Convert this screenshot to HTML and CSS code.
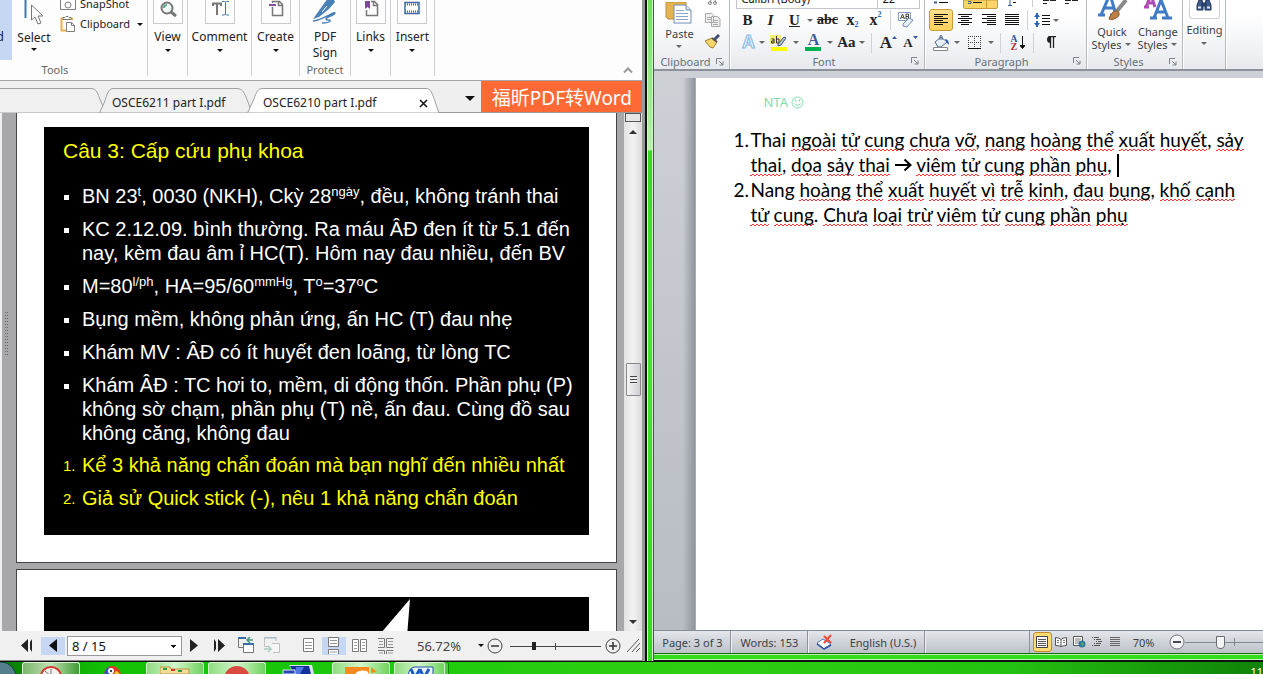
FILE: index.html
```html
<!DOCTYPE html>
<html lang="vi">
<head>
<meta charset="utf-8">
<title>OSCE6210 part I.pdf</title>
<link rel="stylesheet" href="styles.css">
</head>
<body>
<div class="desktop">
<section class="reader" aria-label="PDF reader">
  <div class="rd-ribbon">
    <div class="rd-group tools">
      <div class="tools-row">
        <button class="hand" aria-label="Hand">d</button>
        <button class="select-tool">
          <svg width="26" height="28" viewBox="0 0 26 28"><path d="M4.500 0v18" stroke="#3a78b5" stroke-width="2"/><path d="M10.500 5v15l3.500-3 3 7 3-1-3-7h5z" fill="#fff" stroke="#777" stroke-width="1"/></svg>
          <span>Select</span><i class="caret"></i>
        </button>
        <div class="tools-col">
          <button class="line-btn"><svg width="16" height="14" viewBox="0 0 16 14"><path d="M.5 0v12.500h15V0" fill="none" stroke="#808080"/><circle cx="8" cy="8" r="3" fill="none" stroke="#808080"/></svg><span>SnapShot</span></button>
          <button class="line-btn"><svg width="16" height="16" viewBox="0 0 16 16"><path d="M4 2.500H1.500v12H6M10 2.500h2V4" fill="none" stroke="#eeb050" stroke-width="2"/><path d="M3 3.500V1.500h2L6 .5h2L9 1.500h2v2z" fill="#fff" stroke="#777"/><path d="M6.500 6.500h5l3 3v6h-8zM11.500 6.500v3h3" fill="#fff" stroke="#808080"/></svg><span>Clipboard</span><i class="caret"></i></button>
        </div>
      </div>
      <div class="group-name">Tools</div>
    </div>
    <div class="rd-group g40"><button class="big"><span class="pic"><svg width="28" height="20" viewBox="0 0 28 20"><circle cx="13" cy="8" r="5.500" fill="#f4faf7" stroke="#777" stroke-width="2"/><path d="M10 8a3 3 0 0 1 3-3" fill="none" stroke="#59a98c" stroke-width="2"/><path d="M17 12l5 4" stroke="#777" stroke-width="3"/></svg></span><span>View</span><i class="caret"></i></button></div>
    <div class="rd-group g64"><button class="big"><span class="pic"><svg width="28" height="20" viewBox="0 0 28 20"><path d="M7 6V3.500h8V6M11 4v11" fill="none" stroke="#777" stroke-width="2"/><path d="M16 1.500h2.500L19.500 2l1-.5H23M19.500 2v12M16 15h2.500l1-1 1 1H23" fill="none" stroke="#3a78b5"/></svg></span><span>Comment</span><i class="caret"></i></button></div>
    <div class="rd-group g48"><button class="big"><span class="pic"><svg width="28" height="20" viewBox="0 0 28 20"><path d="M10.500 7v8.500h10v-11l-3-3h-7V3M16.500 1.500v4h4" fill="none" stroke="#777" stroke-width="1.500"/><path d="M7 5h7" stroke="#8a4ba5" stroke-width="2"/></svg></span><span>Create</span><i class="caret"></i></button></div>
    <div class="rd-group g51"><button class="big sign"><svg width="28" height="25" viewBox="0 0 28 25"><path d="M2 19L12 5l5-7h5l2 4-6 7L8 17z" fill="#4a80b8"/><path d="M11 12l5-6" stroke="#fff"/><path d="M2 21c9-1 22-10 22-8s-9 4-9 6 5 0 4 2-5 2-8 2" fill="none" stroke="#4a80b8" stroke-width="1.500"/></svg><span>PDF</span><span>Sign</span></button><div class="group-name">Protect</div></div>
    <div class="rd-group g40"><button class="big"><span class="pic"><svg width="28" height="20" viewBox="0 0 28 20"><path d="M9.500 10v5.500h11v-11l-3-3H14M16.500 1.500v4h4" fill="none" stroke="#777" stroke-width="1.500"/><path d="M8 1h5v8l-2.500-2L8 9z" fill="#7d4a96"/></svg></span><span>Links</span><i class="caret"></i></button></div>
    <div class="rd-group g44"><button class="big"><span class="pic"><svg width="28" height="20" viewBox="0 0 28 20"><path d="M7 2.500h14v11H7z" fill="#fff" stroke="#3a6da5" stroke-width="1.500"/><path d="M7 4.500h14M7 11.500h14" stroke="#3a6da5" stroke-width="2" stroke-dasharray="1 1"/></svg></span><span>Insert</span><i class="caret"></i></button></div>
    <button class="collapse" aria-label="Collapse ribbon"><svg width="10" height="8" viewBox="0 0 10 8"><path d="M1 6.500l4-4 4 4" fill="none" stroke="#999" stroke-width="2"/></svg></button>
  </div>

  <div class="tabs">
    <button class="tab first" aria-label="Previous document"><svg width="108" height="25" viewBox="0 0 108 25"><path d="M-1 .5h92c6 0 7 6 9 11l6 13.500H-1z" fill="#f0f0f0" stroke="#a0a0a0"/></svg></button>
    <button class="tab second"><svg width="154" height="25" viewBox="0 0 154 25"><path d="M.5 25l5-11C7.500 8 9 .5 14 .5h124c6 0 8 6 10 11l5 13.500z" fill="#f0f0f0" stroke="#a0a0a0"/></svg><span>OSCE6211 part I.pdf</span></button>
    <button class="tab third"><svg width="193" height="25" viewBox="0 0 193 25"><path d="M.5 25l6-13C8.500 7 10 .5 15 .5h164c5 0 6 5 8 10l5 14.500z" fill="#fff" stroke="#a0a0a0"/></svg><span>OSCE6210 part I.pdf</span><svg class="x" width="9" height="9" viewBox="0 0 9 9"><path d="M1 1l7 7M8 1L1 8" stroke="#111" stroke-width="1.500"/></svg></button>
    <button class="tab-list" aria-label="Document list"><i class="caret wide"></i></button>
    <button class="promo">福昕PDF转Word</button>
  </div>

  <div class="viewer">
    <div class="nav-strip"><svg width="3" height="44" viewBox="0 0 3 44"><path d="M.5 0v44M2.500 0v44" stroke="#666" stroke-dasharray="1 2"/></svg></div>
    <div class="pages">
      <article class="page">
        <div class="slide">
          <h1>Câu 3: Cấp cứu phụ khoa</h1>
          <ul class="points">
            <li>BN 23<sup>t</sup>, 0030 (NKH), Ckỳ 28<sup>ngày</sup>, đều, không tránh thai</li>
            <li>KC 2.12.09. bình thường. Ra máu ÂĐ đen ít từ 5.1 đến<br>nay, kèm đau âm ỉ HC(T). Hôm nay đau nhiều, đến BV</li>
            <li>M=80<sup>l/ph</sup>, HA=95/60<sup>mmHg</sup>, T<sup>o</sup>=37<sup>o</sup>C</li>
            <li>Bụng mềm, không phản ứng, ấn HC (T) đau nhẹ</li>
            <li>Khám MV : ÂĐ có ít huyết đen loãng, từ lòng TC</li>
            <li>Khám ÂĐ : TC hơi to, mềm, di động thốn. Phần phụ (P)<br>không sờ chạm, phần phụ (T) nề, ấn đau. Cùng đồ sau<br>không căng, không đau</li>
          </ul>
          <ol class="questions">
            <li>Kể 3 khả năng chẩn đoán mà bạn nghĩ đến nhiều nhất</li>
            <li>Giả sử Quick stick (-), nêu 1 khả năng chẩn đoán</li>
          </ol>
        </div>
      </article>
      <article class="page next">
        <div class="slide blank"><svg width="32" height="52" viewBox="0 0 32 52"><path d="M29 2L0 36v16h25z" fill="#fff"/></svg></div>
      </article>
    </div>
    <div class="scroll">
      <span class="split"></span>
      <button aria-label="Scroll up"><svg width="8" height="5" viewBox="0 0 8 5"><path d="M0 5l4-4 4 4z" fill="#333"/></svg></button>
      <span class="thumb"><i></i></span>
      <button class="down" aria-label="Scroll down"><svg width="8" height="5" viewBox="0 0 8 5"><path d="M0 0h8L4 4z" fill="#333"/></svg></button>
    </div>
  </div>

  <div class="rd-status">
    <button class="w-first" aria-label="First page"><svg width="14" height="13" viewBox="0 0 14 13"><path d="M8 0v13L1 6.500zM12 0v13l-2-3V3z" fill="#222"/></svg></button>
    <button class="w-prev on" aria-label="Previous page"><svg width="8" height="13" viewBox="0 0 8 13"><path d="M8 0v13L0 6.500z" fill="#111"/></svg></button>
    <select class="page-no" aria-label="Page"><option>8 / 15</option></select>
    <button class="w-next" aria-label="Next page"><svg width="8" height="13" viewBox="0 0 8 13"><path d="M0 0v13l8-6.500z" fill="#222"/></svg></button>
    <button class="w-last" aria-label="Last page"><svg width="14" height="13" viewBox="0 0 14 13"><path d="M5 0v13l7-6.500zM1 0v13l2-3V3z" fill="#222"/></svg></button>
    <button class="w-view" aria-label="Previous view"><svg width="17" height="17" viewBox="0 0 17 17"><path d="M7 .5H.5v10H5" fill="none" stroke="#777"/><path d="M0 1h8" stroke="#3a6da5" stroke-width="2"/><path d="M5.500 6.500h10v9h-10z" fill="#fff" stroke="#777"/><path d="M5 7h11" stroke="#3a6da5" stroke-width="2"/><path d="M15 3H10M12 0L9 3l3 3" fill="none" stroke="#4a9a7d" stroke-width="1.500"/></svg></button>
    <button class="w-view faded" aria-label="Next view"><svg width="17" height="17" viewBox="0 0 17 17"><path d="M12 4V.5H.5v9H4" fill="none" stroke="#777"/><path d="M0 1h13" stroke="#3a6da5"/><path d="M8 6.500h7.500v9H9" fill="#fff" stroke="#777"/><path d="M0 12h6M4 9l3 3-3 3" fill="none" stroke="#4a9a7d" stroke-width="1.500"/></svg></button>
    <button class="w-mode m1" aria-label="Single page"><svg width="12" height="15" viewBox="0 0 12 15"><path d="M.5.5h10v13H.5z" fill="#fff" stroke="#777"/><path d="M2 4.500h7M2 7.500h7M2 10.500h7" stroke="#999"/></svg></button>
    <button class="w-mode on" aria-label="Continuous"><svg width="12" height="17" viewBox="0 0 12 17"><path d="M.5.5h10v9H.5zM.5 17v-4.500h10V17" fill="#fff" stroke="#777"/><path d="M2 3.500h7M2 6.500h7M2 15h7" stroke="#999"/></svg></button>
    <button class="w-mode m3" aria-label="Facing"><svg width="16" height="14" viewBox="0 0 16 14"><path d="M.5.5h6v12h-6zM8.500.5h6v12h-6z" fill="#fff" stroke="#777"/><path d="M2 3.500h3M2 6.500h3M2 9.500h3M10 3.500h3M10 6.500h3M10 9.500h3" stroke="#999"/></svg></button>
    <button class="w-mode m4" aria-label="Continuous facing"><svg width="16" height="16" viewBox="0 0 16 16"><path d="M0 .5h6.500v9H0M15.500.5h-7v9h7M0 12.500h6.500V16M15.500 12.500h-7V16" fill="none" stroke="#777"/><path d="M1 3.500h4M1 6.500h4M10 3.500h5M10 6.500h5M1 15h4M10 15h5" stroke="#999"/></svg></button>
    <button class="zoom-val">56.72%</button>
    <button class="zoom-drop" aria-label="Zoom menu"><i class="caret"></i></button>
    <button class="round" aria-label="Zoom out"><svg width="16" height="16" viewBox="0 0 16 16"><circle cx="8" cy="8" r="7" fill="none" stroke="#444"/><path d="M4 8h8" stroke="#333" stroke-width="1.500"/></svg></button>
    <input class="zoom-range" type="range" min="0" max="100" value="25" aria-label="Zoom">
    <button class="round" aria-label="Zoom in"><svg width="16" height="16" viewBox="0 0 16 16"><circle cx="8" cy="8" r="7" fill="none" stroke="#444"/><path d="M4 8h8M8 4v8" stroke="#333" stroke-width="1.500"/></svg></button>
    <svg class="grip" width="13" height="13" viewBox="0 0 13 13"><path d="M0 13L12 0M5 13l8-9M9 13l4-4" stroke="#555"/></svg>
  </div>
</section>
<div class="edge"></div>

<section class="word" aria-label="Word processor">
  <div class="wd-ribbon">
    <div class="wg clip">
      <div class="clip-row">
        <button class="paste"><svg width="28" height="22" viewBox="0 0 28 22"><path d="M1 0h20v17H3l-2-2z" fill="#e5b452" stroke="#c08e35"/><path d="M9 3h12l5 5v13H9z" fill="#fff" stroke="#6d8bb5"/><path d="M21 3v5h5" fill="#dce6f3" stroke="#6d8bb5"/><path d="M11 8.500h8M11 11.500h12M11 14.500h12M11 17.500h12" stroke="#8fa5c8"/></svg><span>Paste</span><i class="caret g"></i></button>
        <div class="clip-col">
          <button aria-label="Cut"><svg width="16" height="6" viewBox="0 0 16 6"><path d="M6 0l-1 3M10 0l1 3" stroke="#888"/><circle cx="5" cy="3" r="1.500" fill="none" stroke="#888"/><circle cx="10" cy="3" r="1.500" fill="none" stroke="#888"/></svg></button>
          <button aria-label="Copy"><svg width="16" height="14" viewBox="0 0 16 14"><path d="M.5.5h6l2 2v7h-8zM6.500 3.500h6l2.500 2.500v7.500H6.500z" fill="#eee" stroke="#aaa"/><path d="M2 4.500h4M2 6.500h4M8 7.500h5M8 9.500h5M8 11.500h5" stroke="#aaa"/></svg></button>
          <button aria-label="Format painter"><svg width="17" height="15" viewBox="0 0 17 15"><path d="M10 6l5-5" stroke="#444f78" stroke-width="3"/><path d="M1 7l7-3 5 4-4 6-3-1z" fill="#f3d66b" stroke="#a5802d"/><path d="M8 4l5 4" stroke="#555" stroke-width="2"/></svg></button>
        </div>
      </div>
      <div class="wg-name"><span>Clipboard</span><svg width="8" height="8" viewBox="0 0 8 8"><path d="M.5 6V.5H6M3 3l4 4M7 3.500V7H3.500" fill="none" stroke="#7b828c"/></svg></div>
    </div>
    <div class="wg font">
      <div class="boxes"><span class="fname">Calibri (Body)</span><span class="fsize">22</span></div>
      <div class="tr">
        <button class="s22 b">B</button><button class="s24 it">I</button><button class="s24 un"><u>U</u></button><i class="caret g"></i><button class="s26 st">abc</button><button class="s24 b2">x<sub>2</sub></button><button class="s22 b2">x<sup>2</sup></button><i class="vsep"></i>
        <button class="s22" aria-label="Clear formatting"><svg width="16" height="16" viewBox="0 0 16 16"><path d="M.5.5h12v8H.5z" fill="#fff" stroke="#7d9bc5"/><path d="M2.500 7l2-5 2 5M3.500 5.500h2M8 2v5h2.500V2H8M8 4.500h2" fill="none" stroke="#444"/><path d="M5 12l6-6 4 2-6 7-4-1z" fill="#e8eef8" stroke="#6d8bb5"/></svg></button>
      </div>
      <div class="tr low">
        <button class="s20 glow">A</button><i class="caret g"></i>
        <button class="s26 hl" aria-label="Highlight"><svg width="18" height="16" viewBox="0 0 18 16"><path d="M0 0h11v9H0z" fill="#f4ea78"/><path d="M1.500 4h2.500v4H1.500V6H4M6.500 1v7H9V4H6.500" fill="none" stroke="#333"/><path d="M8 9l6-7 2 1-5 7-3 1z" fill="#aebdd8" stroke="#44567c"/><path d="M1 12h16v4H1z" fill="#ff0"/></svg></button><i class="caret g"></i>
        <button class="s26 fc"><b>A</b></button><i class="caret g"></i>
        <button class="s24 aa">Aa</button><i class="caret g"></i><i class="vsep"></i>
        <button class="s22 grow">A<svg width="5" height="4" viewBox="0 0 5 4"><path d="M0 3l2.500-3L5 3z" fill="#345c9c"/></svg></button><button class="s22 shrink">A<svg width="5" height="4" viewBox="0 0 5 4"><path d="M0 0h5L2.500 3z" fill="#345c9c"/></svg></button>
      </div>
      <div class="wg-name"><span>Font</span><svg width="8" height="8" viewBox="0 0 8 8"><path d="M.5 6V.5H6M3 3l4 4M7 3.500V7H3.500" fill="none" stroke="#7b828c"/></svg></div>
    </div>
    <div class="wg para">
      <svg class="cut-row" width="155" height="9" viewBox="0 0 155 9"><path d="M10 2.500h9" stroke="#111"/><path d="M5 1.500h3v2H5z" fill="#345c9c"/><path d="M34.500 0v7q0 1.500 1.500 1.500h31q1.500 0 1.500-1.500V0z" fill="#fbd667" stroke="#c79a39"/><path d="M57.500 0v8" stroke="#c79a39"/><path d="M39 1.500h3v2h-3" fill="none" stroke="#345c9c"/><path d="M44 2.500h9" stroke="#111"/><path d="M81 0v5M79 5.500h4" stroke="#345c9c"/><path d="M84 2.500h3" stroke="#111"/><path d="M103.500 0v7" stroke="#ccc"/><path d="M114 .5h6M121 .5h6M114 3.500h4M136 .5h6M143 .5h6M136 3.500h4" stroke="#222"/></svg>
      <div class="tr">
        <button class="s24 al on" aria-label="Align left"><svg width="14" height="12" viewBox="0 0 14 12"><path d="M0 .5h14M0 2.500h9M0 4.500h14M0 6.500h9M0 8.500h14M0 10.500h9" stroke="#111"/></svg></button>
        <button class="s24" aria-label="Center"><svg width="14" height="12" viewBox="0 0 14 12"><path d="M0 .5h14M3 2.500h8M0 4.500h14M3 6.500h8M0 8.500h14M3 10.500h8" stroke="#111"/></svg></button>
        <button class="s24" aria-label="Align right"><svg width="14" height="12" viewBox="0 0 14 12"><path d="M0 .5h14M5 2.500h9M0 4.500h14M5 6.500h9M0 8.500h14M5 10.500h9" stroke="#111"/></svg></button>
        <button class="s22" aria-label="Justify"><svg width="14" height="12" viewBox="0 0 14 12"><path d="M0 .5h14M0 2.500h14M0 4.500h14M0 6.500h14M0 8.500h14M0 10.500h14" stroke="#111"/></svg></button><i class="vsep"></i>
        <button class="s20" aria-label="Line spacing"><svg width="16" height="16" viewBox="0 0 16 16"><path d="M3 1v14" stroke="#2d62b5" stroke-width="2"/><path d="M0 5l3-4 3 4zM0 11l3 4 3-4z" fill="#2d62b5"/><path d="M0 8h6" stroke="#f8f9fa" stroke-width="2"/><path d="M8 3.500h8M8 6.500h8M8 9.500h8M8 12.500h8" stroke="#111"/></svg></button><i class="caret g"></i>
      </div>
      <div class="tr low">
        <button class="s24" aria-label="Shading"><svg width="17" height="16" viewBox="0 0 17 16"><path d="M2 7l6-5 6 5-6 5H5z" fill="#e9eff8" stroke="#51698f"/><path d="M7 5V1q1.500-1.500 2 0v4" fill="none" stroke="#51698f"/><path d="M12 4q4 0 4 6l-2-2z" fill="#2d62b5"/><path d="M.5 12.500h14v3H.5z" fill="#fff" stroke="#888"/></svg></button><i class="caret g"></i>
        <button class="s26" aria-label="Borders"><svg width="13" height="13" viewBox="0 0 13 13"><path d="M0 .5h13M0 6.500h13M.5 0v12M6.500 0v12M12.500 0v12" stroke="#444" stroke-dasharray="1 1"/><path d="M0 12.500h13" stroke="#111"/></svg></button><i class="caret g"></i><i class="vsep"></i>
        <button class="s22 sort" aria-label="Sort"><span class="az"><b>A</b><b class="z">Z</b></span><svg width="5" height="14" viewBox="0 0 5 14"><path d="M2.500 0v12M0 9.500l2.500 3L5 9.500z" fill="#111" stroke="#111"/></svg></button><i class="vsep"></i>
        <button class="s22" aria-label="Show marks"><svg width="11" height="13" viewBox="0 0 11 13"><path d="M5.500 0v12M8.500 0v12M3.500 .5H11" stroke="#222" stroke-width="1.300"/><path d="M5.500 0a3.500 3.500 0 0 0 0 7z" fill="#222"/></svg></button>
      </div>
      <div class="wg-name"><span>Paragraph</span><svg width="8" height="8" viewBox="0 0 8 8"><path d="M.5 6V.5H6M3 3l4 4M7 3.500V7H3.500" fill="none" stroke="#7b828c"/></svg></div>
    </div>
    <div class="wg styles">
      <div class="st-row">
        <button><svg width="34" height="23" viewBox="0 0 34 23"><path d="M3 15h7M15 15h9M6 15L15-6l6 21M10 8h9" fill="none" stroke="#3f7ac6" stroke-width="3"/><path d="M31 0l-9 11" stroke="#888" stroke-width="4"/><path d="M14 19c2-6 5-9 8-8s3 5-1 7-5 2-7 1z" fill="#bd8146" stroke="#85562a"/></svg><span>Quick</span><span>Styles <i class="caret g"></i></span></button>
        <button><svg width="34" height="23" viewBox="0 0 34 23"><path d="M3 7h5M5 7l5-12 4 12M7 3h6" fill="none" stroke="#b04bb5" stroke-width="3"/><path d="M9 18h7M21 18h10M13 18L20 0l7 18M15 12h9" fill="none" stroke="#3f7ac6" stroke-width="3"/></svg><span>Change</span><span>Styles <i class="caret g"></i></span></button>
      </div>
      <div class="wg-name"><span>Styles</span><svg width="8" height="8" viewBox="0 0 8 8"><path d="M.5 6V.5H6M3 3l4 4M7 3.500V7H3.500" fill="none" stroke="#7b828c"/></svg></div>
    </div>
    <div class="wg editing"><button><span class="binoc"><svg width="16" height="12" viewBox="0 0 16 12"><path d="M3 0h3l1 4v6H1V5zM10 0h3l2 5v5H9V4zM6 3h4v3H6z" fill="#3c5a8c" stroke="#22385e"/><path d="M2 7.500h3M11 7.500h3" stroke="#dce6f5" stroke-width="2"/></svg></span><span>Editing</span><i class="caret g"></i></button></div>
  </div>

  <div class="wd-body">
    <div class="gutter"></div>
    <article class="sheet">
      <div class="head">NTA <svg width="13" height="13" viewBox="0 0 13 13"><circle cx="6.500" cy="6.500" r="5.500" fill="none" stroke="#7fdcb0"/><path d="M3.500 7.500q3 3.500 6 0" fill="none" stroke="#7fdcb0"/><path d="M4.500 3.500v2M8.500 3.500v2" stroke="#7fdcb0" stroke-width="1.500"/></svg></div>
      <ol class="answers">
        <li><p>Thai <u>ngoài</u> <u>tử</u> <u>cung</u> <u>chưa</u> <u>vỡ</u>, <u>nang</u> <u>hoàng</u> <u>thể</u> <u>xuất</u> <u>huyết</u>, <u>sảy</u><br><u>thai</u>, <u>dọa</u> <u>sảy</u> <u>thai</u> <svg class="arrow" width="17" height="14" viewBox="0 0 17 14"><path d="M0 7h15M9.500 1.500L15.500 7l-6 5.500" fill="none" stroke="#000" stroke-width="2"/></svg> <u>viêm</u> <u>tử</u> <u>cung</u> <u>phần</u> <u>phụ</u>, <i class="cursor"></i></p></li>
        <li><p>Nang <u>hoàng</u> <u>thể</u> <u>xuất</u> <u>huyết</u> <u>vì</u> <u>trễ</u> <u>kinh</u>, <u>đau</u> <u>bụng</u>, <u>khố</u> <u>cạnh</u><br><u>tử</u> <u>cung</u>. <u>Chưa</u> <u>loại</u> <u>trừ</u> <u>viêm</u> <u>tử</u> <u>cung</u> <u>phần</u> <u>phụ</u></p></li>
      </ol>
    </article>
  </div>

  <div class="wd-status">
    <button class="p1">Page: 3 of 3</button>
    <button class="p2">Words: 153</button>
    <button class="p3" aria-label="Proofing"><svg width="17" height="16" viewBox="0 0 17 16"><path d="M1 9l6-4 8 5-7 5z" fill="#fff" stroke="#5577b5"/><path d="M1 10l7 5 7-4" fill="none" stroke="#2d55a5" stroke-width="1.500"/><path d="M8 2l7 7M15 1L8 9" stroke="#f04a3a" stroke-width="2"/></svg></button>
    <button class="p4">English (U.S.)</button>
    <span class="grow-space"></span>
    <button class="v on" aria-label="Print layout"><svg width="13" height="12" viewBox="0 0 13 12"><path d="M.5.5h11v11H.5z" fill="#fff" stroke="#444"/><path d="M2 3.500h8M2 5.500h8M2 7.500h8M2 9.500h8" stroke="#555"/></svg></button>
    <button class="v" aria-label="Reading"><svg width="12" height="12" viewBox="0 0 12 12"><path d="M.5 1.500l4.500 1 1 1 1-1 4.500-1v8L7 10l-1 1-1-1-4.500-.5zM6 3v8" fill="#fff" stroke="#555"/><path d="M2 4.500h2M2 6.500h2M8 4.500h2M8 6.500h2" stroke="#777"/></svg></button>
    <button class="v" aria-label="Web layout"><svg width="13" height="12" viewBox="0 0 13 12"><path d="M.5.5h9v9h-9z" fill="#fff" stroke="#555"/><path d="M2 3h6M2 5h5M2 7h4" stroke="#777"/><circle cx="9" cy="8" r="3.500" fill="#2e7a98"/><path d="M8 6l3 2-2 2z" fill="#67b957"/></svg></button>
    <button class="v" aria-label="Outline"><svg width="10" height="10" viewBox="0 0 10 10"><path d="M0 .5h1M2 .5h5M2 2.500h1M4 2.500h5M4 4.500h1M6 4.500h4M2 6.500h1M4 6.500h5M0 8.500h1M2 8.500h6" stroke="#555"/></svg></button>
    <button class="v" aria-label="Draft"><svg width="10" height="10" viewBox="0 0 10 10"><path d="M0 .5h10M0 2.500h10M0 4.500h10M0 6.500h10M0 8.500h10" stroke="#666"/></svg></button>
    <button class="pct">70%</button>
    <button class="wminus" aria-label="Zoom out"><svg width="16" height="16" viewBox="0 0 16 16"><circle cx="8" cy="8" r="7" fill="#f2f4f6" stroke="#71777f"/><path d="M4 8h8" stroke="#444a52" stroke-width="2"/></svg></button>
    <input class="wrange" type="range" min="0" max="100" value="45" aria-label="Zoom">
  </div>
  <div class="wd-frame"></div>
</section>
</div>

<nav class="taskbar" aria-label="Taskbar">
  <button class="t orb" aria-label="Start"><svg width="18" height="12" viewBox="0 0 18 12"><circle cx="1" cy="15" r="15" fill="#547f8b" stroke="#143"/></svg></button>
  <button class="t glass red" aria-label="Browser"><svg width="24" height="10" viewBox="0 0 24 10"><ellipse cx="12" cy="10" rx="10" ry="9" fill="#f4f0ee" stroke="#d5362e" stroke-width="2"/><path d="M12 3v7M6 5l6 5" stroke="#777"/></svg></button>
  <button class="t" aria-label="Parrot"><svg width="20" height="10" viewBox="0 0 20 10"><path d="M1 10Q2 1 9 1t9 9z" fill="#e83329"/><path d="M1 10Q2 3 7 2v8z" fill="#2b55c8"/><circle cx="8" cy="6" r="3" fill="#fff"/><circle cx="8" cy="6" r="1" fill="#000"/><path d="M11 10q2-8 6 0z" fill="#ffd329"/></svg></button>
  <button class="t glass" aria-label="Files"><svg width="30" height="8" viewBox="0 0 30 8"><path d="M0 1h10l1 2h18v5H0z" fill="#f2dd98" stroke="#bb9443"/><path d="M3 3h4M18 5h4" stroke="#2e9a43" stroke-width="2"/><path d="M11 4h4" stroke="#d33" stroke-width="2"/></svg></button>
  <button class="t glass" aria-label="Recorder"><svg width="28" height="9" viewBox="0 0 28 9"><circle cx="14" cy="13" r="13" fill="#d94b3e"/></svg></button>
  <button class="t" aria-label="Network"><svg width="34" height="9" viewBox="0 0 34 9"><path d="M7 0h23l2 9H12z" fill="#dce6f0"/><path d="M8 1h19l2 8H12z" fill="#16309a"/><path d="M14 2h8l-4 7h-5z" fill="#4e78e0"/><path d="M1 5h12v4H1z" fill="#2848b8" stroke="#dce6f0"/></svg></button>
  <button class="t glass" aria-label="Foxit"><svg width="34" height="10" viewBox="0 0 34 10"><path d="M1 1h24v9H1zM27 1l6 5-6 1z" fill="#f68a1f"/><path d="M10 10q3-7 13-5l3 5z" fill="#fff"/></svg></button>
  <button class="t glass wordb" aria-label="Word"><svg width="30" height="10" viewBox="0 0 30 10"><path d="M3 10Q4 1 10 1h18v9z" fill="#eef4fc" stroke="#2456a8"/><path d="M6 3l3 7M15 3l-4 7M15 3l3 7M24 3l-4 7" stroke="#1e5ec4" stroke-width="3"/></svg></button>
  <span class="clock">11</span>
</nav>
</body>
</html>
```
FILE: styles.css
```css
* { box-sizing: border-box; }
body {
  margin: 0; height: 100vh; overflow: hidden;
  display: flex; flex-direction: column;
  background: #22b80c;
  font-family: "Noto Sans", "Open Sans", sans-serif; font-size: 12px; color: #222;
}
button { border: 0; padding: 0; margin: 0; background: none; font: inherit; color: inherit; }
svg { display: block; flex: none; }
button { display: flex; align-items: center; justify-content: center; white-space: nowrap; }
.caret { display: block; flex: none; width: 0; height: 0; border: 3px solid transparent; border-top-color: #111; border-bottom: 0; }
.caret.wide { border-width: 5px 5px 0; }
.caret.g { border-top-color: #666; margin: 0 1px; }

.desktop { flex: 1; min-height: 0; display: flex; }

/* PDF reader */
.reader { flex: 644 1 0; min-width: 0; display: flex; flex-direction: column; border-right: 3px solid #999; background: #f0f0f0; }
.edge { flex: none; width: 9px; background: linear-gradient(#6ee05c 0, #b9f0ae 150px, #35d91f 151px, #48e634 290px, #32dc1c 100%); border-left: 2px solid #111; border-right: 1px solid #1f7a14; box-shadow: inset 1px 0 #d9f5d4, inset -1px 0 #d0f5c8; }

.rd-ribbon { height: 81px; flex: none; display: flex; align-items: flex-start; background: #fdfdfd; border-bottom: 1px solid #a5a5a5; overflow: hidden; }
.rd-group { flex: none; height: 76px; border-right: 1px solid #cdcdd2; display: flex; flex-direction: column; align-items: center; justify-content: space-between; }
.tools { width: 148px; }
.g40 { width: 40px; } .g64 { width: 64px; } .g48 { width: 48px; } .g51 { width: 51px; } .g44 { width: 44px; }
.group-name { line-height: 12px; font-size: 11px; color: #666; }
.tools-row { display: flex; width: 100%; align-items: flex-start; }
.tools .group-name { padding-right: 37px; }
.hand { width: 12px; height: 60px; background: #c5d7f2; justify-content: flex-end; align-items: flex-end; padding: 0 8px 15px 0; }
.select-tool { width: 44px; flex-direction: column; }
.select-tool span { line-height: 19px; }
.select-tool .caret { margin-top: 1px; }
.tools-col { display: flex; flex-direction: column; gap: 4px; padding-left: 4px; font-size: 11px; }
.line-btn { height: 16px; gap: 4px; line-height: 16px; justify-content: flex-start; align-items: center; }
.line-btn:first-child { height: 12px; padding-bottom: 4px; }
.line-btn .caret { margin-left: 3px; }
.big { flex-direction: column; }
.big > span { line-height: 16px; }
.big .pic { display: flex; justify-content: center; width: 30px; height: 24px; margin-bottom: 5px; border: 1px solid #c9c9ce; border-top: 0; }
.big .caret { margin-top: 4px; }
.sign > svg { margin-bottom: 4px; }
.collapse { margin: 66px 9px 0 auto; }

.tabs { height: 32px; flex: none; display: flex; align-items: flex-end; border-bottom: 1px solid #9a9a9a; background: #efefef; }
.tab { position: relative; height: 24px; flex: none; font-size: 12px; }
.tab > svg:first-child { position: absolute; left: 0; top: 0; }
.tab span { position: relative; }
.first { width: 99px; }
.second { width: 148px; justify-content: flex-start; padding: 5px 0 0 13px; }
.third { width: 193px; justify-content: flex-start; padding: 5px 0 0 16px; }
.third .x { position: relative; margin: 2px 12px 0 auto; }
.tab-list { margin: 0 5px 11px auto; width: 12px; }
.promo { align-self: stretch; width: 161px; background: #ff6935; color: #fff; font: 19px "Noto Sans", "Noto Sans CJK SC", sans-serif; }

.viewer { flex: 1; min-height: 0; display: flex; background: #a8a8aa; overflow: hidden; }
.nav-strip { width: 16px; flex: none; border-left: 2px solid #f0f0f0; padding: 199px 0 0 3px; }
.pages { flex: 1; min-width: 0; display: flex; flex-direction: column; gap: 6px; margin-right: 7px; }
.page { flex: none; background: #fff; border: 1px solid #444; border-top: 0; padding: 14px 27px 27px; }
.page.next { border-top: 1px solid #444; padding-top: 27px; }
.slide { background: #000; color: #fff; padding: 12px 19px 25px; font-family: "Liberation Sans", Arial, sans-serif; font-size: 20px; line-height: 24px; white-space: nowrap; }
.slide h1 { margin: 0 0 21px; font-size: 21px; line-height: 24px; font-weight: normal; color: #ff0; }
.slide ul, .slide ol { margin: 0; padding: 0; list-style: none; display: flex; flex-direction: column; gap: 9px; }
.slide li { position: relative; padding-left: 19px; }
.slide sup { font-size: 13px; line-height: 0; vertical-align: 7px; }
.points li::before { content: ""; position: absolute; left: 1px; top: 11px; width: 5px; height: 5px; background: #fff; }
.questions { color: #ff0; counter-reset: q; }
.slide .questions { margin-top: 8px; }
.questions li::before { counter-increment: q; content: counter(q) "."; position: absolute; left: 0; top: 1px; font-size: 15px; }
.blank { height: 80px; padding: 0; }
.blank svg { margin-left: 337px; }

.scroll { flex: none; width: 18px; display: flex; flex-direction: column; align-items: center; background: linear-gradient(90deg, #e2e2e2, #f2f2f2 50%, #dcdcdc); }
.split { width: 16px; height: 9px; border: 1px solid #555; background: #e6e6e6; }
.scroll button { height: 18px; width: 16px; }
.thumb { margin-top: 223px; width: 15px; height: 33px; border: 1px solid #888; border-radius: 1px; background: linear-gradient(90deg, #f5f5f5, #cfcfd3); display: flex; align-items: center; justify-content: center; }
.thumb i { width: 7px; height: 8px; background: repeating-linear-gradient(#444 0 1px, #eee 1px 3px); }
.down { margin-top: auto; }

.rd-status { flex: none; height: 30px; display: flex; align-items: center; padding-left: 20px; border-bottom: 1px solid #888; background: #f0f0f0; }
.rd-status > * { flex: none; }
.w-first { width: 14px; margin-right: 7px; }
.w-prev { width: 24px; height: 18px; margin-right: 2px; }
.on { background: #c5d7f2; }
.page-no { width: 115px; height: 20px; margin-right: 8px; appearance: none; border: 1px solid #999; border-radius: 0; padding: 0 4px; font: 13px "Noto Sans", sans-serif; color: #111; background: linear-gradient(#111, #111) right 5px top 8px / 5px 1px no-repeat, linear-gradient(#111, #111) right 6px top 9px / 3px 1px no-repeat, linear-gradient(#111, #111) right 7px top 10px / 1px 1px no-repeat, #fff; }
.w-next { width: 8px; margin-right: 15px; }
.w-last { width: 14px; margin-right: 11px; }
.w-view { width: 17px; margin-right: 9px; }
.faded { opacity: .4; margin-right: 16px; }
.w-mode { width: 24px; height: 18px; }
.m1 { margin-right: 1px; }
.m3 { margin-left: 2px; }
.m4 { margin-left: 2px; }
.zoom-val { width: 46px; margin-left: 18px; font-size: 13px; color: #444; }
.zoom-drop { width: 6px; margin: 0 3px 0 16px; }
.round { width: 16px; }
.zoom-range { appearance: none; width: 91px; height: 16px; margin: 0 4px 0 7px; background: linear-gradient(#444, #444) 45px 5px / 1px 7px no-repeat, linear-gradient(#444, #444) 0 8px / 100% 1px no-repeat; }
.zoom-range::-webkit-slider-thumb { appearance: none; width: 4px; height: 8px; background: #222; }
.rd-status .grip { margin-left: 6px; }

/* Word processor */
.word { flex: 610 1 0; min-width: 0; display: flex; flex-direction: column; font-size: 11px; color: #3b3f46; }
.wd-frame { flex: none; height: 8px; background: linear-gradient(#176a0c 0 1px, #b8f2ad 1px 2px, #33dc1d 2px 6px, #c4f5bb 6px 7px, #111 7px); }
.wd-ribbon { flex: none; height: 71px; display: flex; overflow: hidden; background: linear-gradient(#fff 20%, #f4f5f7 60%, #e6e9ed); border-bottom: 2px solid #8d929a; }
.wg { flex: none; height: 69px; display: flex; flex-direction: column; justify-content: space-between; border-right: 1px solid #b5b9c0; box-shadow: 1px 0 #fff; }
.clip { width: 76px; } .font { width: 195px; padding-left: 6px; } .para { width: 162px; padding-left: 4px; } .styles { width: 96px; } .editing { width: 43px; }
.wg-name { display: flex; align-items: center; height: 15px; font-size: 11px; color: #66707d; padding-right: 5px; }
.wg-name span { flex: 1; text-align: center; }
.clip-row { display: flex; justify-content: space-between; }
.paste { flex-direction: column; width: 54px; }
.paste svg { margin-bottom: 2px; }
.paste span { line-height: 16px; }
.paste .caret { margin-top: 3px; }
.clip-col { display: flex; flex-direction: column; gap: 7px; padding-right: 8px; }
.boxes { display: flex; height: 9px; width: 184px; border: 1px solid #c3c7cd; border-top: 0; background: #fff; line-height: 10px; overflow: hidden; color: #111; }
.boxes span { margin-top: -6px; }
.fname { width: 141px; padding-left: 4px; border-right: 1px solid #c3c7cd; }
.fsize { padding-left: 4px; }
.tr { height: 22px; display: flex; align-items: center; font-family: "Liberation Serif", serif; font-size: 15px; color: #222; }
.tr > button { flex: none; height: 22px; }
.s20 { width: 20px; } .s22 { width: 22px; } .s24 { width: 24px; } .s26 { width: 26px; }
.b { font-weight: bold; } .it { font-style: italic; font-weight: bold; } .un { font-weight: bold; }
.st { font-size: 14px; font-weight: bold; text-decoration: line-through; }
.b2 { font-weight: bold; font-size: 16px; }
.b2 sub, .b2 sup { font-size: 8px; color: #2d62b5; line-height: 0; }
.b2 sub { align-self: flex-end; margin-bottom: 6px; } .b2 sup { align-self: flex-start; margin-top: 6px; }
.vsep { flex: none; width: 1px; height: 20px; margin: 0 4px; background: #cfd3d9; }
.tr.low .vsep { margin: 0 5px; }
.font .low { padding-left: 2px; }
.glow { font-family: "Liberation Sans", sans-serif; font-weight: bold; font-size: 18px; color: #e9f3fd; -webkit-text-stroke: 1px #7fb4e2; }
.fc b { width: 16px; height: 17px; border-bottom: 4px solid #00b050; color: #3d5d98; font-size: 16px; line-height: 12px; }
.aa { font-weight: bold; }
.grow { font-weight: bold; font-size: 17px; } .shrink { font-weight: bold; font-size: 13px; }
.grow svg, .shrink svg { align-self: flex-start; margin-top: 4px; }
.al.on { background: linear-gradient(#fde08a, #fdd05a); border: 1px solid #c79a39; border-radius: 3px; }
.sort { gap: 2px; }
.az { display: flex; flex-direction: column; font: 10px/8px "Liberation Serif", serif; color: #2d55a5; }
.z { color: #a33; }
.st-row { display: flex; justify-content: center; gap: 4px; }
.st-row button { flex-direction: column; width: 42px; }
.st-row svg { margin-bottom: 2px; }
.st-row span { display: flex; align-items: center; gap: 3px; line-height: 13px; }
.editing button { flex-direction: column; }
.binoc { width: 31px; height: 19px; border: 1px solid #cdd1d7; border-top: 0; border-radius: 0 0 3px 3px; display: flex; justify-content: center; margin-bottom: 3px; }
.editing button > span:nth-child(2) { line-height: 16px; }
.editing .caret { margin-top: 4px; }

.wd-body { flex: 1; min-height: 0; display: flex; padding-top: 7px; background: linear-gradient(#cdd0d5, #b8bcc3); }
.gutter { flex: none; width: 42px; background: linear-gradient(90deg, transparent 70%, #8f959d); border-right: 1px solid #a5acb5; }
.sheet { flex: 1; min-width: 0; background: #fff; padding: 14px 8px 0 37px; }
.head { display: flex; align-items: center; gap: 3px; padding-left: 30px; line-height: 20px; font-size: 13px; color: #7fdcb0; }
.answers { margin: 15px 0 0; padding: 0; list-style: none; counter-reset: a; font: 19px/25px Lato, "Noto Sans", sans-serif; color: #000; white-space: nowrap; }
.answers li { display: flex; }
.answers li::before { counter-increment: a; content: counter(a) "."; flex: none; width: 17px; }
.answers p { margin: 0; }
/* spelling squiggle: two offset dashed rows */
.answers u { text-decoration: none; background: repeating-linear-gradient(90deg, #f33 0 2px, transparent 2px 4px) 0 100% / 100% 1px no-repeat, repeating-linear-gradient(90deg, transparent 0 2px, #f33 2px 4px) 0 calc(100% - 1px) / 100% 1px no-repeat; }
.arrow { display: inline-block; }
.cursor { display: inline-block; width: 2px; height: 23px; background: #000; vertical-align: -5px; }

.wd-status { flex: none; height: 23px; display: flex; align-items: stretch; background: linear-gradient(#e3e6ea, #bcc1c8); border-top: 1px solid #868c95; }
.wd-status > * { flex: none; }
.p1, .p2, .p4 { border-right: 1px solid #8d929a; box-shadow: 1px 0 #eef0f3; }
.p1 { width: 77px; } .p2 { width: 77px; } .p3 { width: 33px; } .p4 { width: 84px; }
.wd-status .grow-space { flex: 1; border-right: 1px solid #8d929a; margin-right: 3px; }
.v { width: 18px; }
.v.on { width: 19px; margin: 1px 0; background: #fddb74; border: 1px solid #c28a2e; border-radius: 3px; }
.pct { width: 34px; padding-left: 5px; }
.wminus { width: 16px; margin-left: 11px; }
.wrange { appearance: none; width: 78px; margin: 0; align-self: center; height: 16px; background: linear-gradient(#80868e, #80868e) 49px 4px / 1px 8px no-repeat, linear-gradient(#80868e, #80868e) 0 8px / 100% 1px no-repeat; }
.wrange::-webkit-slider-thumb { appearance: none; width: 9px; height: 13px; background: #f3f4f6; border: 1px solid #666c74; border-radius: 1px 1px 5px 5px; }

/* Taskbar */
.taskbar { flex: none; height: 13px; display: flex; align-items: flex-start; overflow: hidden; background: linear-gradient(90deg, #087a08, #12c004 8%, #1cc90c 30%, #2fcf12 55%, #24c010 80%, #179a0a 92%, #108208); border-top: 1px solid #111; }
.t { flex: none; height: 12px; width: 58px; margin-right: 4px; padding-top: 3px; align-items: flex-start; }
.orb { width: 18px; padding: 0; }
.glass { background: linear-gradient(90deg, #8fdc80, #d4f5cc 50%, #6fd35e); border: 1px solid #d7f3d0; border-bottom: 0; border-radius: 3px 3px 0 0; }
.red { background: linear-gradient(90deg, #7cb56c, #bfe0b4 50%, #3f9c34); }
.wordb { width: 51px; box-shadow: 3px 0 #4bd039, 4px 0 #128408; }
.clock { margin-left: auto; line-height: 20px; color: #fff; font-size: 11px; }
```
